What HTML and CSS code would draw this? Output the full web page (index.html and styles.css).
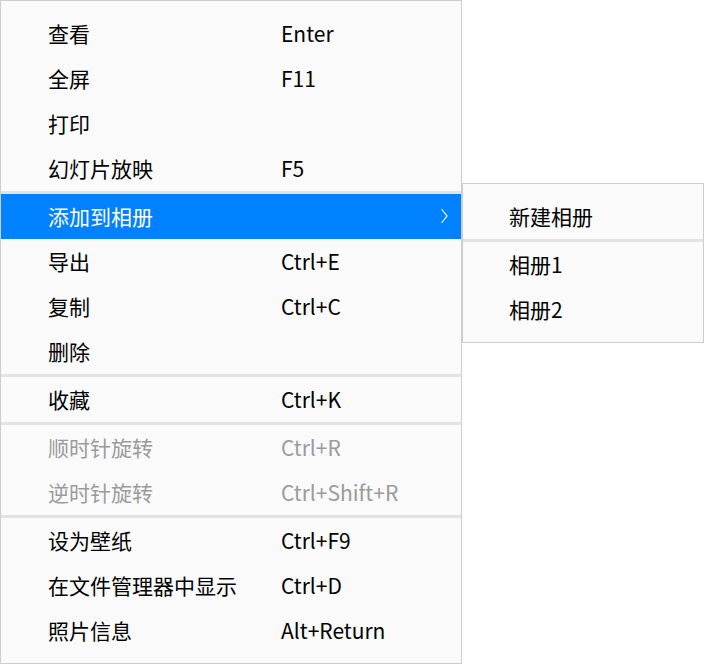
FILE: index.html
```html
<!DOCTYPE html>
<html lang="zh">
<head>
<meta charset="utf-8">
<link rel="stylesheet" href="styles.css">
</head>
<body>
<div class="desk">
  <div class="menu main">
    <div class="item"><span class="label">查看</span><span class="key">Enter</span></div>
    <div class="item"><span class="label">全屏</span><span class="key">F11</span></div>
    <div class="item"><span class="label">打印</span><span class="key"></span></div>
    <div class="item"><span class="label">幻灯片放映</span><span class="key">F5</span></div>
    <div class="sep"></div>
    <div class="item active"><span class="label">添加到相册</span><span class="key"></span>
      <svg class="arrow" width="9" height="16" viewBox="0 0 9 16"><polyline points="1.5,1 7,8 1.5,15" fill="none" stroke="#fff" stroke-width="1.2"/></svg>
    </div>
    <div class="item"><span class="label">导出</span><span class="key">Ctrl+E</span></div>
    <div class="item"><span class="label">复制</span><span class="key">Ctrl+C</span></div>
    <div class="item"><span class="label">删除</span><span class="key"></span></div>
    <div class="sep"></div>
    <div class="item"><span class="label">收藏</span><span class="key">Ctrl+K</span></div>
    <div class="sep"></div>
    <div class="item disabled"><span class="label">顺时针旋转</span><span class="key">Ctrl+R</span></div>
    <div class="item disabled"><span class="label">逆时针旋转</span><span class="key">Ctrl+Shift+R</span></div>
    <div class="sep"></div>
    <div class="item"><span class="label">设为壁纸</span><span class="key">Ctrl+F9</span></div>
    <div class="item"><span class="label">在文件管理器中显示</span><span class="key">Ctrl+D</span></div>
    <div class="item"><span class="label">照片信息</span><span class="key">Alt+Return</span></div>
  </div>
  <div class="menu sub">
    <div class="item"><span class="label">新建相册</span></div>
    <div class="sep"></div>
    <div class="item"><span class="label">相册1</span></div>
    <div class="item"><span class="label">相册2</span></div>
  </div>
</div>
</body>
</html>
```
FILE: styles.css
```css
html, body {
  margin: 0;
  padding: 0;
  background: #ffffff;
}
body {
  font-family: "Noto Sans CJK SC", "Noto Sans", sans-serif;
  font-size: 21px;
  color: #000;
}
.desk {
  display: flex;
  align-items: flex-start;
  width: 704px;
  height: 665px;
}
.menu {
  background: #fafafa;
  border: 1px solid #cdcdcd;
  padding: 10px 0;
  box-sizing: border-box;
}
.main {
  width: 462px;
}
.sub {
  width: 242px;
  margin-top: 183px;
}
.item {
  height: 45px;
  display: flex;
  align-items: center;
  position: relative;
  line-height: 1;
}
.main .item .label {
  padding-left: 47px;
  width: 233px;
}
.sub .item .label {
  padding-left: 46px;
}
.item.active {
  background: #0081ff;
  color: #fff;
}
.item.disabled {
  color: #9b9b9b;
}
.arrow {
  position: absolute;
  left: 439px;
  top: 14px;
}
.sep {
  height: 3px;
  background: #e3e3e3;
}
```
